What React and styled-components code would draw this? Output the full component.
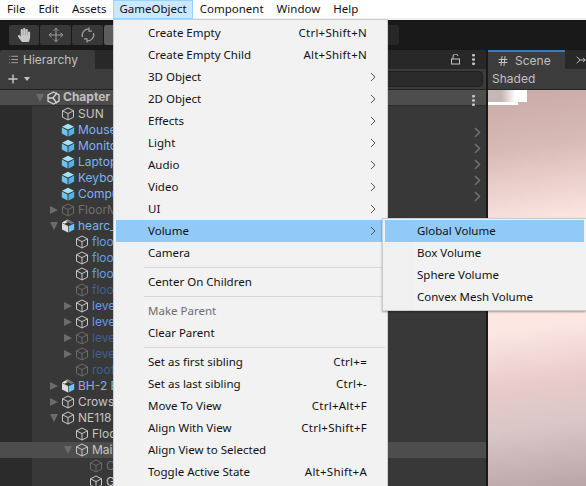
import React from 'react';
import styled, { createGlobalStyle } from 'styled-components';
import { FaHandPaper } from 'react-icons/fa';
import { Move, Plus, Hash, List } from 'lucide-react';

const GlobalStyle = createGlobalStyle`
    html, body { margin: 0; padding: 0; background: #191919; }
    #root { width: 586px; height: 486px; overflow: hidden; position: relative; }
`;

const menuFont = `"Noto Sans", "Open Sans", sans-serif`;
const editorFont = `Inter, "Noto Sans", sans-serif`;

const topItems = ['File', 'Edit', 'Assets', 'GameObject', 'Component', 'Window', 'Help'];

const gameObjectMenu = [
    { label: 'Create Empty', keys: 'Ctrl+Shift+N' },
    { label: 'Create Empty Child', keys: 'Alt+Shift+N' },
    { label: '3D Object', more: true },
    { label: '2D Object', more: true },
    { label: 'Effects', more: true },
    { label: 'Light', more: true },
    { label: 'Audio', more: true },
    { label: 'Video', more: true },
    { label: 'UI', more: true },
    { label: 'Volume', more: true, active: true },
    { label: 'Camera' },
    { sep: true },
    { label: 'Center On Children' },
    { sep: true },
    { label: 'Make Parent', disabled: true },
    { label: 'Clear Parent' },
    { sep: true },
    { label: 'Set as first sibling', keys: 'Ctrl+=' },
    { label: 'Set as last sibling', keys: 'Ctrl+-' },
    { label: 'Move To View', keys: 'Ctrl+Alt+F' },
    { label: 'Align With View', keys: 'Ctrl+Shift+F' },
    { label: 'Align View to Selected' },
    { label: 'Toggle Active State', keys: 'Alt+Shift+A' },
];

const volumeMenu = ['Global Volume', 'Box Volume', 'Sphere Volume', 'Convex Mesh Volume'];

const tree = [
    { label: 'Chapter', depth: 0, arrow: 'open', icon: 'unity', tone: 'head' },
    { label: 'SUN', depth: 1, icon: 'cube' },
    { label: 'Mouse', depth: 1, icon: 'prefab', tone: 'blue', more: true },
    { label: 'Monitor', depth: 1, icon: 'prefab', tone: 'blue', more: true },
    { label: 'Laptop', depth: 1, icon: 'prefab', tone: 'blue', more: true },
    { label: 'Keyboard', depth: 1, icon: 'prefab', tone: 'blue', more: true },
    { label: 'Computer', depth: 1, icon: 'prefab', tone: 'blue', more: true },
    { label: 'FloorMesh', depth: 1, arrow: 'closed', icon: 'cube', tone: 'dim', faded: true },
    { label: 'hearc_', depth: 1, arrow: 'open', icon: 'model', tone: 'blue' },
    { label: 'floor', depth: 2, icon: 'cube', tone: 'midblue' },
    { label: 'floor', depth: 2, icon: 'cube', tone: 'midblue' },
    { label: 'floor', depth: 2, icon: 'cube', tone: 'midblue' },
    { label: 'floor', depth: 2, icon: 'cube', tone: 'dimblue', faded: true },
    { label: 'level', depth: 2, arrow: 'closed', icon: 'cube', tone: 'midblue' },
    { label: 'level', depth: 2, arrow: 'closed', icon: 'cube', tone: 'midblue' },
    { label: 'level', depth: 2, arrow: 'closed', icon: 'cube', tone: 'dimblue', faded: true },
    { label: 'level', depth: 2, arrow: 'closed', icon: 'cube', tone: 'dimblue', faded: true },
    { label: 'roof', depth: 2, icon: 'cube', tone: 'dimblue', faded: true },
    { label: 'BH-2 B', depth: 1, arrow: 'closed', icon: 'model', tone: 'blue' },
    { label: 'Crows', depth: 1, arrow: 'closed', icon: 'cube' },
    { label: 'NE118', depth: 1, arrow: 'open', icon: 'cube' },
    { label: 'Floor', depth: 2, icon: 'cube' },
    { label: 'Main', depth: 2, arrow: 'open', icon: 'cube', hover: true },
    { label: 'C', depth: 3, icon: 'cube', tone: 'dim', faded: true },
    { label: 'G', depth: 3, icon: 'cube' },
];

const toneColors = {
    plain: '#c4c4c4',
    head: '#c0c0c0',
    blue: '#7cb3f2',
    midblue: '#6a9ce0',
    dimblue: '#41608f',
    dim: '#6f6f6f',
};

const CubeIcon = ({ faded }) => (
    <svg width="14" height="14" viewBox="0 0 14 14" fill="none" stroke={faded ? '#6c6c6c' : '#c8c8c8'} strokeWidth="1">
        <path d="M7 1 L12.5 3.8 V10.2 L7 13 L1.5 10.2 V3.8 Z" />
        <path d="M1.5 3.8 L7 6.6 L12.5 3.8 M7 6.6 V13" />
    </svg>
);

const PrefabIcon = () => (
    <svg width="14" height="14" viewBox="0 0 14 14">
        <path d="M7 .8 L13 3.7 L7 6.6 L1 3.7 Z" fill="#a6e3fb" />
        <path d="M.8 4.6 L6.5 7.4 V13.4 L.8 10.5 Z" fill="#6cc5f2" />
        <path d="M13.2 4.6 L7.5 7.4 V13.4 L13.2 10.5 Z" fill="#53b2ea" />
    </svg>
);

const ModelIcon = () => (
    <svg width="14" height="14" viewBox="0 0 14 14">
        <path d="M1 4 L7 7 V13.4 L1 10.5 Z" fill="#dcdcdc" />
        <path d="M13.2 4.4 L7.6 7.2 V13.4 L13.2 10.5 Z" fill="#6cc5f2" />
        <path d="M1 3.4 L6.5 .6 L9 1.8 L3.6 4.8 Z" fill="#e8e8e8" />
        <path d="M7.2 .8 L13 3.4 L10.4 4.8 L4.8 2.2 Z" fill="#7a7a7a" />
    </svg>
);

const UnityIcon = () => (
    <svg width="13" height="14" viewBox="0 0 13 14" fill="none" stroke="#cfcfcf" strokeWidth="1.4">
        <path d="M6.5 1 L12 4 V10 L6.5 13 L1 10 V4 Z" />
        <path d="M1 7 H6 L10 1.8 M6 7 L10 12.2" />
    </svg>
);

const treeIcons = { cube: CubeIcon, prefab: PrefabIcon, model: ModelIcon, unity: UnityIcon };

const MenuChevron = () => (
    <svg width="6" height="10" viewBox="0 0 6 10" fill="none" stroke="#555" strokeWidth="1">
        <path d="M1 1 L5 5 L1 9" />
    </svg>
);

const Dots = () => (
    <svg width="3" height="11" viewBox="0 0 3 11" fill="#c4c4c4">
        <rect width="3" height="2.4" rx="1" />
        <rect y="4.3" width="3" height="2.4" rx="1" />
        <rect y="8.6" width="3" height="2.4" rx="1" />
    </svg>
);

const App = () => {
    return (
        <>
            <GlobalStyle />
            <Page>
                <MenuBar>
                    {topItems.map((item) => (
                        <TopItem key={item} $open={item === 'GameObject'}>{item}</TopItem>
                    ))}
                </MenuBar>

                <Toolbar>
                    <ToolGroup>
                        <ToolButton><FaHandPaper size={14} color="#c8c8c8" /></ToolButton>
                        <ToolButton $wide><Move size={16} color="#a0a0a0" strokeWidth={1.5} /></ToolButton>
                        <ToolButton $wide>
                            <svg width="16" height="16" viewBox="0 0 16 16" fill="none" stroke="#a0a0a0" strokeWidth="1.2">
                                <path d="M2.5 10 A6 6 0 0 1 9 2.2 M13.5 6 A6 6 0 0 1 7 13.8" />
                                <path d="M9 .5 V4.2 H12 M7 15.5 V11.8 H4" />
                            </svg>
                        </ToolButton>
                        <ToolButton $active />
                    </ToolGroup>
                    <RightTool><OrangeMark /></RightTool>
                </Toolbar>

                <Panels>
                    <HierarchyPanel>
                        <TabStrip>
                            <HierarchyTab>
                                <List size={11} color="#a8a8a8" />
                                <TabLabel>Hierarchy</TabLabel>
                            </HierarchyTab>
                            <TabTools>
                                <svg width="9" height="11" viewBox="0 0 9 11" fill="none" stroke="#c4c4c4" strokeWidth="1">
                                    <rect x=".5" y="5" width="8" height="5" />
                                    <path d="M2 5 V3 A2.5 2.5 0 0 1 7 2" />
                                </svg>
                                <Dots />
                            </TabTools>
                        </TabStrip>
                        <SearchRow>
                            <Plus size={14} color="#c8c8c8" strokeWidth={2.4} />
                            <Caret />
                            <SearchField />
                        </SearchRow>
                        <Tree>
                            {tree.map((row, i) => {
                                const Icon = treeIcons[row.icon];
                                return (
                                    <TreeRow key={i} $depth={row.depth} $head={row.tone === 'head'} $hover={row.hover}>
                                        <ArrowSlot>{row.arrow && <Arrow $open={row.arrow === 'open'} />}</ArrowSlot>
                                        <Icon faded={row.faded} />
                                        <RowLabel $tone={row.tone || 'plain'} $head={row.tone === 'head'}>{row.label}</RowLabel>
                                        {row.tone === 'head' && <RowDots><Dots /></RowDots>}
                                        {row.more && (
                                            <RowMore>
                                                <svg width="7" height="11" viewBox="0 0 7 11" fill="none" stroke="#6e6e6e" strokeWidth="1.6">
                                                    <path d="M1 1 L5.5 5.5 L1 10" />
                                                </svg>
                                            </RowMore>
                                        )}
                                    </TreeRow>
                                );
                            })}
                        </Tree>
                    </HierarchyPanel>

                    <ScenePanel>
                        <SceneTabs>
                            <SceneTab>
                                <Hash size={12} color="#c4c4c4" />
                                <TabLabel>Scene</TabLabel>
                            </SceneTab>
                            <svg width="12" height="12" viewBox="0 0 12 12" fill="none" stroke="#c4c4c4" strokeWidth="1.2">
                                <path d="M1 2 L5 6 L1 10 M5 6 H11 M8.5 3.5 L11 6 L8.5 8.5" />
                            </svg>
                        </SceneTabs>
                        <ShadedRow>Shaded</ShadedRow>
                        <SceneView><Artifact /></SceneView>
                    </ScenePanel>
                </Panels>

                <Dropdown>
                    {gameObjectMenu.map((item, i) =>
                        item.sep ? (
                            <Separator key={i} />
                        ) : (
                            <MenuRow key={i} $active={item.active} $disabled={item.disabled}>
                                <span>{item.label}</span>
                                {item.keys && <Keys>{item.keys}</Keys>}
                                {item.more && <MoreMark><MenuChevron /></MoreMark>}
                            </MenuRow>
                        )
                    )}
                </Dropdown>

                <SubMenu>
                    {volumeMenu.map((label, i) => (
                        <SubRow key={label} $active={i === 0}>{label}</SubRow>
                    ))}
                </SubMenu>
            </Page>
        </>
    );
};

export default App;

const Page = styled.div`
    width: 586px;
    height: 486px;
    display: flex;
    flex-direction: column;
    background: #191919;
    overflow: hidden;
    position: relative;
`;

const MenuBar = styled.div`
    height: 18px;
    flex: none;
    display: flex;
    align-items: stretch;
    padding-left: 0.5px;
    background: #ffffff;
    border-bottom: 2px solid #f0f0f0;
    font-family: ${menuFont};
    font-size: 11.5px;
    color: #111;
`;

const TopItem = styled.div`
    height: 19px;
    line-height: 18px;
    padding: 0 6.5px;
    position: relative;
    z-index: 3;
    ${(p) => p.$open && `
        background: #cce8ff;
        box-shadow: inset 0 0 0 1px #99d1ff;
    `}
`;

const Toolbar = styled.div`
    height: 30px;
    flex: none;
    display: flex;
    align-items: center;
    justify-content: space-between;
    padding: 0 187px 0 9px;
    box-sizing: border-box;
    background: #191919;
`;

const ToolGroup = styled.div`
    display: flex;
    gap: 1px;
`;

const ToolButton = styled.div`
    width: ${(p) => (p.$wide ? '31px' : '30px')};
    height: 20px;
    display: flex;
    align-items: center;
    justify-content: center;
    background: ${(p) => (p.$active ? '#5c5c5c' : '#383838')};
    border-radius: 2px;
`;

const RightTool = styled.div`
    width: 24px;
    height: 20px;
    border-radius: 3px;
    background: #272727;
    display: flex;
    align-items: center;
`;

const OrangeMark = styled.div`
    width: 1px;
    height: 8px;
    border-radius: 0 4px 4px 0;
    background: #a5532c;
    margin-left: 12px;
`;

const Panels = styled.div`
    flex: 1;
    min-height: 0;
    display: flex;
    gap: 2px;
`;

const HierarchyPanel = styled.div`
    width: 486px;
    flex: none;
    display: flex;
    flex-direction: column;
    background: #383838;
`;

const TabStrip = styled.div`
    height: 19px;
    flex: none;
    display: flex;
    justify-content: space-between;
    background: #282828;
`;

const HierarchyTab = styled.div`
    width: 95px;
    box-sizing: border-box;
    display: flex;
    align-items: center;
    gap: 4px;
    padding-left: 8px;
    background: #3c3c3c;
    border-radius: 3px 3px 0 0;
`;

const TabLabel = styled.span`
    font-family: ${editorFont};
    font-size: 12px;
    color: #c0c0c0;
`;

const TabTools = styled.div`
    display: flex;
    align-items: center;
    gap: 12px;
    padding-right: 11px;
`;

const SearchRow = styled.div`
    height: 21px;
    flex: none;
    box-sizing: border-box;
    display: flex;
    align-items: center;
    padding: 0 3px 0 6px;
    background: #3c3c3c;
    border-bottom: 1px solid #232323;
`;

const Caret = styled.div`
    width: 0;
    height: 0;
    margin-left: 4px;
    border-left: 3.5px solid transparent;
    border-right: 3.5px solid transparent;
    border-top: 4px solid #c4c4c4;
`;

const SearchField = styled.div`
    flex: 1;
    height: 16px;
    margin-left: 170px;
    background: #2a2a2a;
    border: 1px solid #202020;
    box-sizing: border-box;
    border-radius: 4px;
`;

const Tree = styled.div`
    flex: 1;
    min-height: 0;
    overflow: hidden;
    background: linear-gradient(to right, #2b2b2b 32px, #383838 32px);
`;

const TreeRow = styled.div`
    height: 16px;
    box-sizing: border-box;
    display: flex;
    align-items: center;
    position: relative;
    padding-left: ${(p) => 33 + p.$depth * 14}px;
    ${(p) => p.$head && 'background: #4d4d4d; border-bottom: 1px solid #2c2c2c;'}
    ${(p) => p.$hover && 'background: #4d4d4d;'}
`;

const ArrowSlot = styled.div`
    width: 14px;
    flex: none;
    display: flex;
    align-items: center;
    justify-content: center;
`;

const Arrow = styled.div`
    width: 0;
    height: 0;
    ${(p) => p.$open ? `
        border-left: 4.5px solid transparent;
        border-right: 4.5px solid transparent;
        border-top: 8px solid #6b6b6b;
    ` : `
        border-top: 4.5px solid transparent;
        border-bottom: 4.5px solid transparent;
        border-left: 8px solid #6b6b6b;
    `}
`;

const RowLabel = styled.span`
    margin-left: 3px;
    margin-bottom: 2px;
    font-family: ${editorFont};
    font-size: 12px;
    font-weight: ${(p) => (p.$head ? 700 : 400)};
    color: ${(p) => toneColors[p.$tone]};
    white-space: nowrap;
`;

const RowDots = styled.div`
    position: absolute;
    right: 11px;
    top: 2px;
`;

const RowMore = styled.div`
    position: absolute;
    right: 5px;
    top: 2px;
`;

const ScenePanel = styled.div`
    flex: 1;
    min-width: 0;
    display: flex;
    flex-direction: column;
`;

const SceneTabs = styled.div`
    height: 19px;
    flex: none;
    display: flex;
    align-items: center;
    gap: 11px;
    background: #282828;
`;

const SceneTab = styled.div`
    width: 77px;
    height: 19px;
    flex: none;
    box-sizing: border-box;
    display: flex;
    align-items: center;
    gap: 6px;
    padding-left: 9px;
    background: #3c3c3c;
    border-top: 2px solid #3a79bb;
`;

const ShadedRow = styled.div`
    height: 21px;
    flex: none;
    box-sizing: border-box;
    padding-left: 4px;
    line-height: 19px;
    background: #3c3c3c;
    border-bottom: 1px solid #232323;
    font-family: ${editorFont};
    font-size: 12px;
    color: #c0c0c0;
`;

const SceneView = styled.div`
    flex: 1;
    position: relative;
    background: linear-gradient(172deg, #c9aaa6 0%, #d8bab5 15%, #fbe3df 33%, #ffe9e5 50%, #fbe6e2 60%, #e9cbca 73%, #d9c6c6 84%, #b9a5a5 100%);
`;

const Artifact = styled.div`
    position: absolute;
    left: 0;
    top: 0;
    width: 39px;
    height: 12px;
    background: linear-gradient(to right, #c5b7b4 0%, #c5b7b4 35%, #fff 70%, #fff 100%);

    &::after {
        content: "";
        position: absolute;
        left: 0;
        top: 12px;
        width: 30px;
        height: 3px;
        background: #fff;
    }
`;

const Dropdown = styled.div`
    position: absolute;
    z-index: 2;
    left: 113px;
    top: 19px;
    width: 275px;
    height: 470px;
    box-sizing: border-box;
    padding: 2px 2px 0;
    background: linear-gradient(to right, #f0f0f0 30px, #f2f2f2 30px);
    border: 1px solid #cccccc;
    font-family: ${menuFont};
    font-size: 11.5px;
    color: #111;
`;

const MenuRow = styled.div`
    height: 22px;
    line-height: 21px;
    position: relative;
    padding-left: 32px;
    white-space: nowrap;
    color: ${(p) => (p.$disabled ? '#6d6d6d' : '#111')};
    ${(p) => p.$active && 'background: #91c9f7;'}
`;

const Keys = styled.span`
    position: absolute;
    right: 18px;
    letter-spacing: 0.25px;
`;

const MoreMark = styled.span`
    position: absolute;
    right: 9px;
    top: 6px;
    display: flex;
`;

const Separator = styled.div`
    height: 1px;
    margin: 3px 0 3px 28px;
    background: #d7d7d7;
`;

const SubMenu = styled.div`
    position: absolute;
    z-index: 3;
    left: 382px;
    top: 218px;
    width: 204px;
    height: 93px;
    box-sizing: border-box;
    padding: 1px 2px 0;
    background: linear-gradient(to right, #f0f0f0 31px, #f2f2f2 31px);
    border: 1px solid #cccccc;
    border-right: 0;
    box-shadow: 0 1px 2px rgba(0, 0, 0, 0.35);
    font-family: ${menuFont};
    font-size: 11.5px;
    color: #111;
`;

const SubRow = styled.div`
    height: 22px;
    line-height: 22px;
    padding-left: 32px;
    white-space: nowrap;
    ${(p) => p.$active && 'background: #91c9f7;'}
`;
